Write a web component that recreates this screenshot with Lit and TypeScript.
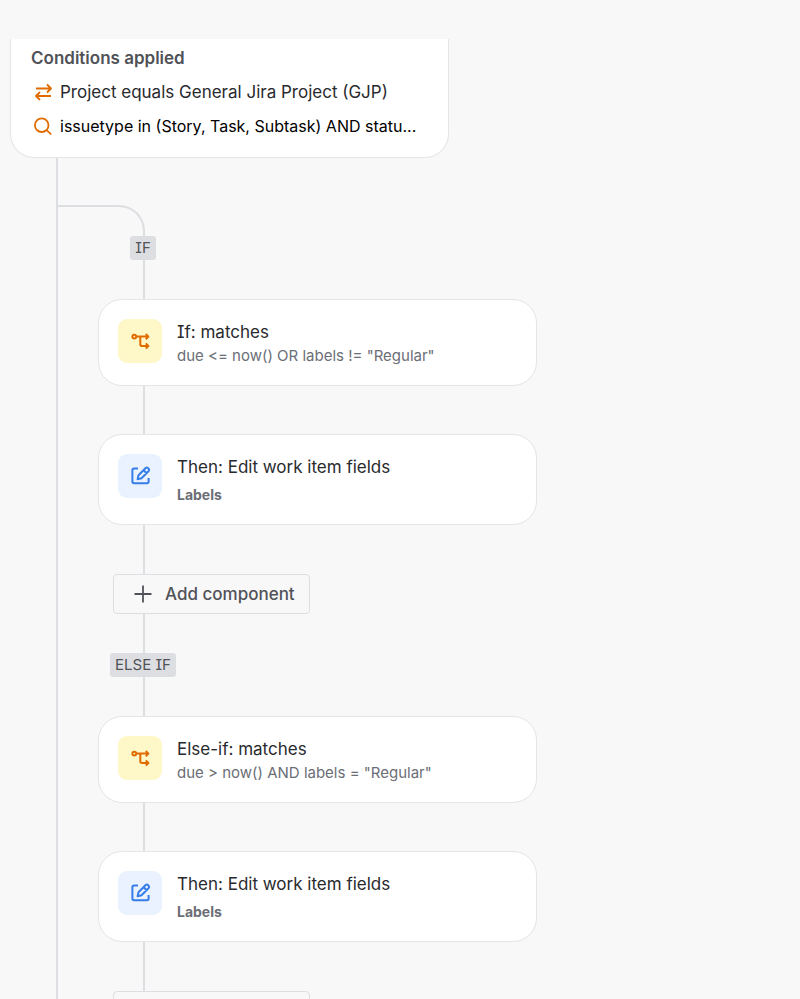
import { LitElement, html, css, svg } from "lit";
import { customElement, property } from "lit/decorators.js";

type StepKind = "condition" | "edit";

interface Step {
  kind: StepKind;
  title: string;
  detail: string;
}

interface Branch {
  label: string;
  steps: Step[];
}

const branches: Branch[] = [
  {
    label: "IF",
    steps: [
      { kind: "condition", title: "If: matches", detail: 'due <= now() OR labels != "Regular"' },
      { kind: "edit", title: "Then: Edit work item fields", detail: "Labels" },
    ],
  },
  {
    label: "ELSE IF",
    steps: [
      { kind: "condition", title: "Else-if: matches", detail: 'due > now() AND labels = "Regular"' },
      { kind: "edit", title: "Then: Edit work item fields", detail: "Labels" },
    ],
  },
];

const icons = {
  swap: svg`<path d="M5 8.5H20M16 4.5l4 4-4 4M20 16H5M9 12l-4 4 4 4" />`,
  search: svg`<circle cx="10.7" cy="11.2" r="6.8" /><path d="M15.6 16.2l4.6 4.2" />`,
  condition: svg`<circle cx="6.3" cy="7.6" r="1.9" /><path d="M8.3 7.6H20.3M17.8 5l2.6 2.6-2.6 2.6M12.3 7.6V15.2q0 1.8 1.8 1.8H20.3M17.8 14.4l2.6 2.6-2.6 2.6" />`,
  edit: svg`<path d="M10 4.4H6q-1.6 0-1.6 1.6V17.6q0 1.6 1.6 1.6H19q1.6 0 1.6-1.6V14" /><path d="M9.6 15.2l.9-4 7.2-7.2q1.1-1 2.3.1l.6.6q1.1 1.2.1 2.3l-7.2 7.2zM15.6 6.2l3 3" />`,
  add: svg`<path d="M12 3.5V20.5M3.5 12H20.5" />`,
};

const icon = (name: keyof typeof icons) =>
  html`<svg class="icon" viewBox="0 0 24 24" width="24" height="24" aria-hidden="true">${icons[name]}</svg>`;

const iconStyles = css`
  .icon {
    display: block;
    flex: none;
    fill: none;
    stroke: currentColor;
    stroke-width: 1.8;
    stroke-linejoin: round;
  }
`;

@customElement("conditions-card")
class ConditionsCard extends LitElement {
  static styles = [
    iconStyles,
    css`
      :host {
        display: block;
        box-sizing: border-box;
        width: 100%;
        max-width: 439px;
        padding: 7px 20px 19px;
        background: #fff;
        border: 1px solid #e4e5e7;
        border-top: none;
        border-radius: 0 0 24px 24px;
      }
      .title {
        margin: 0 0 10px;
        font-size: 17px;
        font-weight: 600;
        line-height: 24px;
        color: #505258;
      }
      .list {
        display: flex;
        flex-direction: column;
        gap: 10px;
        margin: 0;
        padding: 0;
        list-style: none;
      }
      .row {
        display: flex;
        align-items: center;
        gap: 5px;
        line-height: 24px;
        color: #292a2e;
      }
      .row .icon {
        color: #e06c00;
      }
      .text {
        white-space: nowrap;
      }
      .query {
        font-size: 16px;
        color: #000;
      }
    `,
  ];

  render() {
    return html`
      <h2 class="title">Conditions applied</h2>
      <ul class="list">
        <li class="row">${icon("swap")}<span class="text">Project equals General Jira Project (GJP)</span></li>
        <li class="row">${icon("search")}<span class="text query">issuetype in (Story, Task, Subtask) AND statu...</span></li>
      </ul>
    `;
  }
}

@customElement("step-card")
class StepCard extends LitElement {
  @property() kind: StepKind = "condition";
  @property() heading = "";
  @property() detail = "";

  static styles = [
    iconStyles,
    css`
      :host {
        display: block;
        width: 100%;
        max-width: 439px;
      }
      .card {
        display: flex;
        gap: 15px;
        padding: 19px 19px 17px;
        background: #fff;
        border: 1px solid #e4e5e7;
        border-radius: 24px;
      }
      .tile {
        display: grid;
        place-items: center;
        flex: none;
        width: 44px;
        height: 44px;
        border-radius: 9px;
      }
      .tile .icon {
        stroke-width: 2;
      }
      .condition .tile {
        background: #fef7c8;
        color: #e06c00;
      }
      .edit .tile {
        background: #e9f2fe;
        color: #357de8;
      }
      .body {
        padding-top: 1px;
      }
      .title {
        margin: 0;
        font-size: 17px;
        font-weight: 400;
        line-height: 24px;
        color: #292a2e;
      }
      .detail {
        margin: 0;
        font-size: 15px;
        line-height: 24px;
        color: #6b6e76;
      }
      .edit .detail {
        margin-top: 4px;
        font-size: 14px;
        font-weight: 700;
      }
    `,
  ];

  render() {
    return html`
      <article class="card ${this.kind}">
        <div class="tile">${icon(this.kind)}</div>
        <div class="body">
          <h3 class="title">${this.heading}</h3>
          <p class="detail">${this.detail}</p>
        </div>
      </article>
    `;
  }
}

@customElement("app-root")
class AppRoot extends LitElement {
  static styles = [
    iconStyles,
    css`
      :host {
        display: flex;
        flex-direction: column;
        box-sizing: border-box;
        height: 100vh;
        padding: 39px 10px 0;
        overflow: hidden;
        background: #f8f8f8;
        font-family: Inter, sans-serif;
        font-feature-settings: "cv08";
        font-size: 17px;
      }
      conditions-card {
        flex: none;
      }
      .tree {
        flex: 1;
        min-height: 0;
        margin-left: 46px;
        border-left: 2px solid #dddee1;
      }
      .elbow {
        box-sizing: border-box;
        width: 87px;
        height: 31px;
        margin-top: 47px;
        border: solid #dddee1;
        border-width: 2px 2px 0 0;
        border-top-right-radius: 26px;
      }
      .branch {
        margin-left: 40px;
      }
      .link {
        width: 2px;
        height: 48px;
        margin-left: 45px;
        background: #dddee1;
      }
      .link.short {
        height: 39px;
      }
      .link.last {
        height: 49px;
      }
      .marker {
        display: flex;
        justify-content: center;
        width: 90px;
      }
      .badge {
        padding: 0 5px;
        border-radius: 3px;
        background: #dddee1;
        color: #505258;
        font-size: 15px;
        line-height: 24px;
      }
      .add {
        display: flex;
        align-items: center;
        gap: 10px;
        box-sizing: border-box;
        height: 40px;
        margin: 0 0 0 15px;
        padding: 0 14px 0 17px;
        border: 1px solid #dddee1;
        border-radius: 4px;
        background: #f8f8f8;
        color: #505258;
        font: inherit;
        font-weight: 500;
        cursor: pointer;
      }
    `,
  ];

  render() {
    return html`
      <conditions-card></conditions-card>
      <main class="tree">
        <div class="elbow"></div>
        ${branches.map(
          (branch, index) => html`
            <section class="branch" aria-label=${branch.label}>
              ${index > 0 ? html`<div class="link short"></div>` : null}
              <div class="marker"><span class="badge">${branch.label}</span></div>
              <div class="link short"></div>
              ${branch.steps.map(
                (step, i) => html`
                  <step-card .kind=${step.kind} .heading=${step.title} .detail=${step.detail}></step-card>
                  <div class="link ${i === branch.steps.length - 1 ? "last" : ""}"></div>
                `
              )}
              <button class="add" type="button">${icon("add")}<span>Add component</span></button>
            </section>
          `
        )}
      </main>
    `;
  }
}
